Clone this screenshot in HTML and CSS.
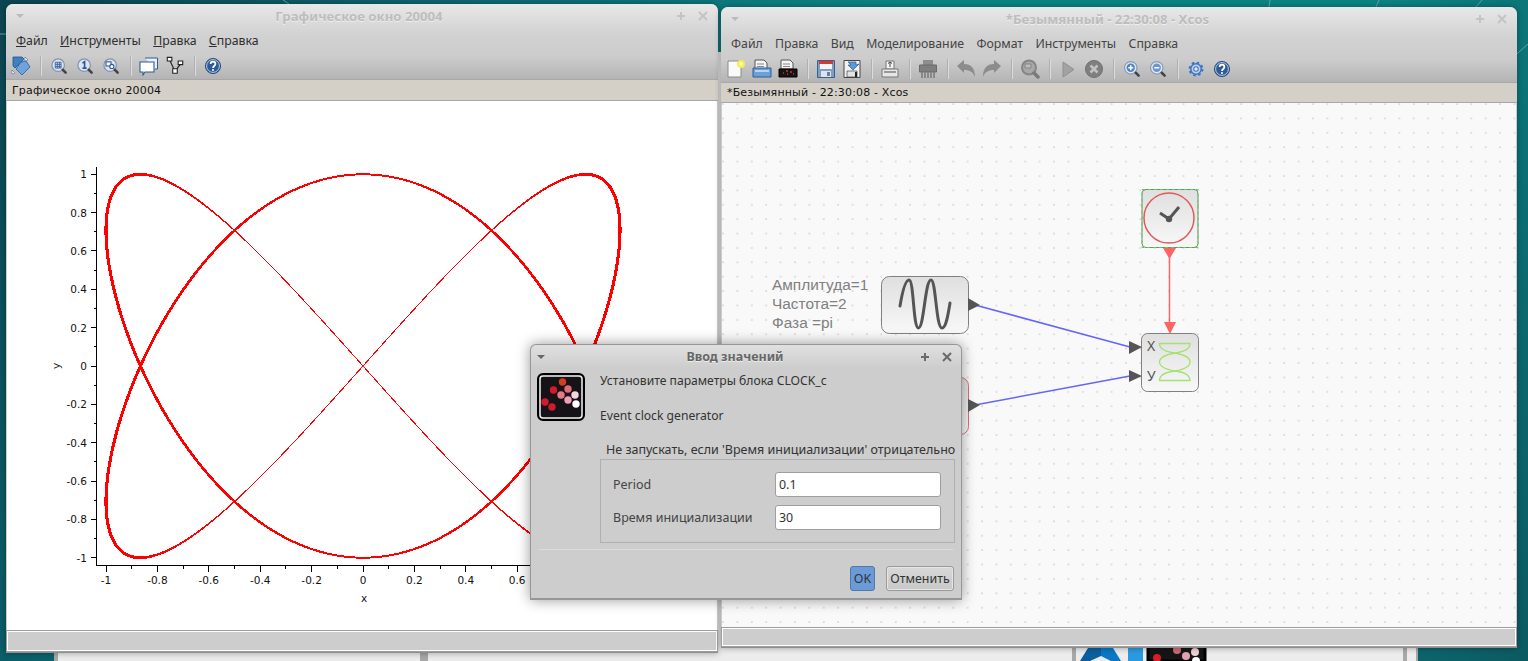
FILE: index.html
```html
<!DOCTYPE html>
<html lang="ru">
<head>
    <meta charset="UTF-8">
    <title>Xcos</title>
    <link rel="stylesheet" href="styles.css">
</head>
<body>
    <svg class="sprites" width="0" height="0">
        <defs>
            <linearGradient id="blockFill" x1="0" y1="0" x2="0" y2="1">
                <stop offset="0" stop-color="#dfdfdf"/>
                <stop offset="1" stop-color="#f8f8f8"/>
            </linearGradient>
            <symbol id="i-rotate" viewBox="0 0 20 20">
                <path d="M2 1h9l2 2-9 9-2-2z" fill="#3f7fc4" stroke="#24548c" stroke-width=".8"/>
                <path d="M10 6l5-1 4 6-8 8-6-6z" fill="#6ea3dc" stroke="#2c5c96" stroke-width=".8"/>
                <path d="M14 1l3 3-3 1zM1 14l3 3-3 1z" fill="#fff" stroke="#2c5c96" stroke-width=".5"/>
            </symbol>
            <symbol id="i-zoom-grid" viewBox="-2 -2 24 24">
                <circle cx="9" cy="9" r="7.5" fill="#dbe4f0" stroke="#8294ae" stroke-width="1.5"/>
                <path d="M5.5 5.5h7v7h-7zM5.5 8h7M5.5 10.500h7M8 5.500v7M10.500 5.500v7" fill="none" stroke="#2f5a98"/>
                <path d="M14.500 14.500l3.500 3.500" stroke="#444" stroke-width="3" stroke-linecap="round"/>
            </symbol>
            <symbol id="i-zoom-one" viewBox="-2 -2 24 24">
                <circle cx="9" cy="9" r="7.500" fill="#dbe4f0" stroke="#8294ae" stroke-width="1.5"/>
                <path d="M7 6.500l2.500-1.500v7.500M7 12.500h5" fill="none" stroke="#2f5a98" stroke-width="2"/>
                <path d="M14.500 14.500l3.500 3.500" stroke="#444" stroke-width="3" stroke-linecap="round"/>
            </symbol>
            <symbol id="i-zoom-fit" viewBox="-2 -2 24 24">
                <circle cx="9" cy="9" r="7.500" fill="#dbe4f0" stroke="#8294ae" stroke-width="1.500"/>
                <rect x="4" y="5" width="6" height="5" fill="#fff" stroke="#2f5a98" stroke-width="1.300"/>
                <circle cx="11" cy="10.500" r="2.500" fill="#fff" stroke="#2f5a98" stroke-width="1.300"/>
                <path d="M14.500 14.500l3.500 3.500" stroke="#444" stroke-width="3" stroke-linecap="round"/>
            </symbol>
            <symbol id="i-windows" viewBox="0 0 20 20">
                <path d="M6 2h12.500v11H16" fill="#e8f0fa" stroke="#2c5c96"/>
                <path d="M1 6h14v10H6l-2 3v-3H1z" fill="#fff" stroke="#2c5c96" stroke-width="1.100"/>
            </symbol>
            <symbol id="i-tree" viewBox="-1 -1 22 22">
                <path d="M4 3l6 13 6-8" fill="none" stroke="#222" stroke-width="1.300"/>
                <path d="M1.500 .500h5v4h-5zM7.500 13h5v5h-5zM13.500 4.500h5v4h-5z" fill="#fff" stroke="#222" stroke-width="1.200"/>
            </symbol>
            <symbol id="i-help" viewBox="-2.500 -2.500 25 25">
                <circle cx="10" cy="10" r="9.500" fill="#2f5a98" stroke="#1b3f74"/>
                <circle cx="10" cy="10" r="8" fill="none" stroke="#dfe8f4"/>
                <path d="M7 7.500c0-4 6-4 6 0 0 2.500-3 2.500-3 5" fill="none" stroke="#fff" stroke-width="2.200"/>
                <circle cx="10" cy="15" r="1.300" fill="#fff"/>
            </symbol>
            <symbol id="i-new" viewBox="0 0 20 20">
                <path d="M2 2h13v16H2z" fill="#fafafa" stroke="#8a8a8a"/>
                <circle cx="15" cy="5" r="4" fill="#f6ee4a"/>
                <circle cx="15" cy="5" r="2" fill="#fffbc0"/>
            </symbol>
            <symbol id="i-open" viewBox="0 0 20 20">
                <path d="M3 1h9l3 3v6H3z" fill="#f4f4f4" stroke="#555"/>
                <path d="M5 5h7M5 7.500h7" stroke="#888"/>
                <path d="M1 9h18v9H1z" fill="#6d9fd8" stroke="#2c5c96"/>
                <path d="M3 12h14" stroke="#b7d3f0" stroke-width="2"/>
            </symbol>
            <symbol id="i-open-black" viewBox="0 0 20 20">
                <path d="M3 1h9l3 3v6H3z" fill="#f4f4f4" stroke="#555"/>
                <path d="M5 5h7M5 7.500h7" stroke="#888"/>
                <path d="M1 10h18v8H1z" fill="#151515" stroke="#000"/>
                <path d="M5 14h1M8 12h2M9 15h1M12 13h2M15 15h1" stroke="#e02828" stroke-width="1.500"/>
            </symbol>
            <symbol id="i-save" viewBox="0 0 20 20">
                <path d="M1.500 1.500h17v17h-17z" fill="#7d9ec6" stroke="#38608f"/>
                <path d="M3 2h14v3H3z" fill="#d8382e"/>
                <path d="M4 5h12v5H4z" fill="#f5f5f5"/>
                <path d="M5 12h10v6H5z" fill="#dfe4ea"/>
                <path d="M11 13h3v4h-3z" fill="#6d7f96"/>
            </symbol>
            <symbol id="i-save-as" viewBox="0 0 20 20">
                <path d="M2 1.500h16v17H2z" fill="#f2f2f2" stroke="#444"/>
                <path d="M5 12h10v6H5z" fill="#e2e2e2" stroke="#444" stroke-width=".7"/>
                <path d="M13 13h2v5h-2z" fill="#222"/>
                <path d="M6 3h8v3l3-1-6 6-5-5h3z" fill="#5a9ad8" stroke="#2c5c96" stroke-width=".7"/>
            </symbol>
            <symbol id="i-import" viewBox="0 0 20 20">
                <path d="M6 2h8v8H6z" fill="#f4f4f4" stroke="#777"/>
                <path d="M10 3v5M8 4.500l2-1.500 2 1.500" fill="none" stroke="#444"/>
                <path d="M2 10h16v8H2z" fill="#e6e6e6" stroke="#777"/>
                <path d="M4 13h12" stroke="#999" stroke-width="2"/>
            </symbol>
            <symbol id="i-shred" viewBox="0 0 20 20">
                <path d="M5 1h10v6H5z" fill="#8e8e8e"/>
                <path d="M1.500 6h17v7h-17z" fill="#7f7f7f" stroke="#6a6a6a"/>
                <path d="M4 13v6M7 13v6M10 13v6M13 13v6M16 13v6" stroke="#808080" stroke-width="1.700"/>
            </symbol>
            <symbol id="i-undo" viewBox="0 0 20 20">
                <path d="M1 7l7-6v4c7 0 11 4 11 13-2-5-5-7-11-7v3z" fill="#8c8c8c"/>
            </symbol>
            <symbol id="i-redo" viewBox="0 0 20 20">
                <path d="M19 7l-7-6v4c-7 0-11 4-11 13 2-5 5-7 11-7v3z" fill="#8c8c8c"/>
            </symbol>
            <symbol id="i-zoom-off" viewBox="0 0 20 20">
                <circle cx="9" cy="8.500" r="7" fill="#a8a8a8" stroke="#858585" stroke-width="2"/>
                <path d="M5 5h6v4H5z" fill="#bdbdbd" stroke="#858585"/>
                <path d="M14 14l4 4" stroke="#7a7a7a" stroke-width="3.500" stroke-linecap="round"/>
            </symbol>
            <symbol id="i-play" viewBox="0 0 20 20">
                <path d="M5 3l11 7.500-11 7.500z" fill="#a2a2a2" stroke="#909090"/>
            </symbol>
            <symbol id="i-stop" viewBox="0 0 20 20">
                <circle cx="10" cy="10" r="8.500" fill="#7f7f7f" stroke="#707070"/>
                <path d="M6.500 6.500l7 7M13.500 6.500l-7 7" stroke="#c2c2c2" stroke-width="2.500"/>
            </symbol>
            <symbol id="i-zoom-in" viewBox="-2 -2 24 24">
                <circle cx="8.500" cy="8.500" r="7.500" fill="#e0e8f3" stroke="#8a9ab3" stroke-width="1.500"/>
                <circle cx="8.500" cy="8.500" r="5" fill="#4f82c4"/>
                <path d="M5.500 8.500h6M8.500 5.500v6" stroke="#fff" stroke-width="2"/>
                <path d="M14.500 14.500l3.500 3.500" stroke="#444" stroke-width="3" stroke-linecap="round"/>
            </symbol>
            <symbol id="i-zoom-out" viewBox="-2 -2 24 24">
                <circle cx="8.500" cy="8.500" r="7.500" fill="#e0e8f3" stroke="#8a9ab3" stroke-width="1.500"/>
                <circle cx="8.500" cy="8.500" r="5" fill="#6d95ca"/>
                <path d="M5.500 8.500h6" stroke="#fff" stroke-width="2"/>
                <path d="M14.500 14.500l3.500 3.500" stroke="#444" stroke-width="3" stroke-linecap="round"/>
            </symbol>
            <symbol id="i-gear" viewBox="-3.500 -3.500 27 27">
                <circle cx="10" cy="10" r="7" fill="#bcd0ec" stroke="#3f74c4" stroke-width="2"/>
                <circle cx="10" cy="10" r="8.500" fill="none" stroke="#3f74c4" stroke-width="3" stroke-dasharray="3.300 3.370"/>
                <circle cx="10" cy="10" r="3" fill="#e4ecf8" stroke="#3f74c4" stroke-width="1.500"/>
            </symbol>
        </defs>
    </svg>

    <!-- окна за основными, видны только снизу -->
    <div class="back-window">
        <div class="back-pane back-pane-a"></div>
        <div class="back-pane back-pane-b"></div>
        <div class="back-pane back-pane-c">
            <svg class="back-icons" width="135" height="14" viewBox="0 0 135 14">
                <path d="M8 1H21V9L10 14H0z" fill="#0a5f9e"/>
                <path d="M21 1H33L41 14H31L21 9z" fill="#0a78c4"/>
                <rect x="48" y="0" width="15" height="14" fill="#2a9ae0"/>
                <rect x="68" y="-6" width="57" height="20" fill="#151515" stroke="#000" stroke-width="3"/>
                <circle cx="97" cy="3" r="4" fill="#d06878"/>
                <circle cx="106" cy="9" r="4" fill="#e4a0b0"/>
                <circle cx="115" cy="5" r="4" fill="#f0d0d8"/>
                <circle cx="116" cy="14" r="4" fill="#fff"/>
                <circle cx="77" cy="11" r="4" fill="#d81c28"/>
            </svg>
        </div>
        <div class="back-pane back-pane-d"></div>
    </div>

    <svg class="wallpaper" width="1528" height="661" viewBox="0 0 1528 661">
        <path d="M0 34h6M1270 0l-1 7M1379 0l-3 7M1482 0l-6 7M283 0l6 4M1510 60l18-16" stroke="#5fa5a8" fill="none"/>
    </svg>

    <!-- графическое окно -->
    <div class="window plot-window">
        <div class="win-head">
            <div class="win-title">
                <svg class="wm-btn" width="12" height="12"><path d="M2 4h8l-4 4z" fill="#bbb"/></svg>
                <span class="title-text">Графическое окно 20004</span>
                <svg class="wm-btn" width="12" height="12"><path d="M6 2v8M2 6h8" stroke="#c4c4c4" stroke-width="2"/></svg>
                <svg class="wm-btn" width="12" height="12"><path d="M2 2l8 8M10 2l-8 8" stroke="#c4c4c4" stroke-width="2"/></svg>
            </div>
            <div class="menubar menubar-plot">
                <span><u>Ф</u>айл</span>
                <span><u>И</u>нструменты</span>
                <span><u>П</u>равка</span>
                <span><u>С</u>правка</span>
            </div>
            <div class="toolbar">
                <svg class="ico"><use href="#i-rotate"/></svg>
                <i class="tool-sep"></i>
                <svg class="ico"><use href="#i-zoom-grid"/></svg>
                <svg class="ico"><use href="#i-zoom-one"/></svg>
                <svg class="ico"><use href="#i-zoom-fit"/></svg>
                <i class="tool-sep"></i>
                <svg class="ico"><use href="#i-windows"/></svg>
                <svg class="ico"><use href="#i-tree"/></svg>
                <i class="tool-sep"></i>
                <svg class="ico"><use href="#i-help"/></svg>
            </div>
        </div>
        <div class="tabbar">Графическое окно 20004</div>
        <div class="canvas plot-canvas">
            <svg id="plot" width="710" height="529" viewBox="7 101 710 529"></svg>
        </div>
        <div class="statusbar"></div>
    </div>

    <!-- окно Xcos -->
    <div class="window xcos-window">
        <div class="win-head">
            <div class="win-title">
                <svg class="wm-btn" width="12" height="12"><path d="M2 4h8l-4 4z" fill="#bbb"/></svg>
                <span class="title-text">*Безымянный - 22:30:08 - Xcos</span>
                <svg class="wm-btn" width="12" height="12"><path d="M6 2v8M2 6h8" stroke="#c4c4c4" stroke-width="2"/></svg>
                <svg class="wm-btn" width="12" height="12"><path d="M2 2l8 8M10 2l-8 8" stroke="#c4c4c4" stroke-width="2"/></svg>
            </div>
            <div class="menubar menubar-xcos">
                <span>Файл</span>
                <span>Правка</span>
                <span>Вид</span>
                <span>Моделирование</span>
                <span>Формат</span>
                <span>Инструменты</span>
                <span>Справка</span>
            </div>
            <div class="toolbar">
                <svg class="ico"><use href="#i-new"/></svg>
                <svg class="ico"><use href="#i-open"/></svg>
                <svg class="ico"><use href="#i-open-black"/></svg>
                <i class="tool-sep"></i>
                <svg class="ico"><use href="#i-save"/></svg>
                <svg class="ico"><use href="#i-save-as"/></svg>
                <i class="tool-sep"></i>
                <svg class="ico"><use href="#i-import"/></svg>
                <i class="tool-sep"></i>
                <svg class="ico"><use href="#i-shred"/></svg>
                <i class="tool-sep"></i>
                <svg class="ico"><use href="#i-undo"/></svg>
                <svg class="ico"><use href="#i-redo"/></svg>
                <i class="tool-sep"></i>
                <svg class="ico"><use href="#i-zoom-off"/></svg>
                <i class="tool-sep"></i>
                <svg class="ico"><use href="#i-play"/></svg>
                <svg class="ico"><use href="#i-stop"/></svg>
                <i class="tool-sep"></i>
                <svg class="ico"><use href="#i-zoom-in"/></svg>
                <svg class="ico"><use href="#i-zoom-out"/></svg>
                <i class="tool-sep"></i>
                <svg class="ico"><use href="#i-gear"/></svg>
                <svg class="ico"><use href="#i-help"/></svg>
            </div>
        </div>
        <div class="tabbar">*Безымянный - 22:30:08 - Xcos</div>
        <div class="canvas xcos-canvas">
            <svg width="794" height="524" viewBox="722 103 794 524">
                <text class="note" x="772" y="290">Амплитуда=1</text>
                <text class="note" x="772" y="309">Частота=2</text>
                <text class="note" x="772" y="328">Фаза =pi</text>

                <rect class="block" x="881.500" y="276.500" width="87" height="57" rx="8"/>
                <path d="M900 306C903 288 906 280 909 280C914 280 913 328 918.500 328C924 328 925 280 931 280C936 280 936 328 942 328C946 328 948 315 950 303" fill="none" stroke="#555" stroke-width="3" stroke-linecap="round"/>

                <rect class="block block-red" x="881.500" y="377.500" width="87" height="57" rx="8"/>

                <rect class="block" x="1142" y="189.500" width="56" height="58" rx="4"/>
                <rect x="1142" y="189.500" width="56" height="58" fill="none" stroke="#44e044" stroke-dasharray="3 3"/>
                <circle cx="1169" cy="218" r="25" fill="none" stroke="#e05a5a" stroke-width="1.500"/>
                <path d="M1160 213l9 6 10-12" fill="none" stroke="#555" stroke-width="3"/>
                <circle cx="1169" cy="219" r="3.200" fill="#555"/>

                <rect class="block" x="1141.500" y="333.500" width="57" height="58" rx="6"/>
                <text class="port-label" x="1147" y="351">X</text>
                <text class="port-label" x="1147" y="381">У</text>
                <path d="M1159.500 343.500H1190C1190 349 1183 352 1175 353C1167 352 1159.500 349 1159.500 343.500ZM1175 353C1164 355 1159.500 358 1159.500 362C1159.500 366 1164 369 1175 371C1186 369 1190 366 1190 362C1190 358 1186 355 1175 353ZM1159.500 380.500H1190C1190 375 1183 372 1175 371C1167 372 1159.500 375 1159.500 380.500Z" fill="none" stroke="#a6e070" stroke-width="1.300"/>

                <path d="M975 305L1130 347M975 405L1130 376" stroke="#6464ff" stroke-width="1.500" fill="none"/>
                <path d="M1169.500 252V323" stroke="#ff6464" stroke-width="1.500"/>
                <path d="M1163 248h13l-6.500 11zM1164 322h12l-6 12z" fill="#ff6464"/>
                <path d="M968 298l12 7-12 6zM968 399l12 6-12 7zM1129 341l13 6-13 7zM1129 370l13 6-13 6z" fill="#555"/>
            </svg>
        </div>
        <div class="statusbar"></div>
    </div>

    <!-- диалог -->
    <div class="dialog">
        <div class="dlg-title">
            <svg class="wm-btn" width="12" height="12"><path d="M2 4h8l-4 4z" fill="#666"/></svg>
            <span class="dlg-title-text">Ввод значений</span>
            <svg class="wm-btn" width="12" height="12"><path d="M6 2v8M2 6h8" stroke="#6a6a6a" stroke-width="2"/></svg>
            <svg class="wm-btn" width="12" height="12"><path d="M2 2l8 8M10 2l-8 8" stroke="#6a6a6a" stroke-width="2"/></svg>
        </div>
        <div class="dlg-body">
            <svg class="dlg-logo" width="48" height="48" viewBox="0 0 48 48">
                <rect x="1" y="1" width="46" height="46" rx="5" fill="#151318" stroke="#000" stroke-width="2"/>
                <rect x="3" y="3" width="42" height="42" rx="3" fill="#151318" stroke="#f2f2f2" stroke-width="1.500"/>
                <circle cx="25.500" cy="9" r="3.700" fill="#d0401e"/>
                <circle cx="16.500" cy="17" r="3.700" fill="#d01c2a"/>
                <circle cx="31" cy="16" r="3.700" fill="#e06a7a"/>
                <circle cx="24" cy="22" r="3.700" fill="#e67888"/>
                <circle cx="38" cy="22" r="3.700" fill="#f6d4da"/>
                <circle cx="31" cy="27" r="3.700" fill="#f0a0b4"/>
                <circle cx="8" cy="29" r="3.700" fill="#d01c2a"/>
                <circle cx="15" cy="34" r="3.700" fill="#d01c2a"/>
                <circle cx="39" cy="31" r="3.700" fill="#fff"/>
            </svg>
            <div class="dlg-main">
                <p class="msg msg-first">Установите параметры блока CLOCK_c</p>
                <p class="msg msg-second">Event clock generator</p>
                <p class="msg msg-legend">Не запускать, если 'Время инициализации' отрицательно</p>
                <div class="fields">
                    <div class="field">
                        <span class="field-label">Period</span>
                        <input class="field-input" type="text" value="0.1">
                    </div>
                    <div class="field">
                        <span class="field-label">Время инициализации</span>
                        <input class="field-input" type="text" value="30">
                    </div>
                </div>
            </div>
        </div>
        <div class="dlg-sep"></div>
        <div class="dlg-buttons">
            <button class="btn btn-ok">OK</button>
            <button class="btn">Отменить</button>
        </div>
    </div>

    <script src="script.js"></script>
</body>
</html>
```

FILE: styles.css
```css
* {
    box-sizing: border-box;
}
html, body {
    margin: 0;
    height: 661px;
    overflow: hidden;
}
body {
    position: relative;
    width: 1528px;
    font-family: 'Noto Sans', sans-serif;
    font-size: 12.500px;
    color: #333;
    background: linear-gradient(115deg, #0c4652 0%, #0c6a72 25%, #0c8484 50%, #0c8484 75%, #0c5a62 100%);
}
.sprites {
    position: absolute;
}
.wallpaper {
    position: absolute;
    left: 0;
    top: 0;
}

/* окна позади */
.back-window {
    position: absolute;
    left: 54px;
    top: 52px;
    width: 1364px;
    height: 609px;
    display: flex;
    background: #a8a8a8;
    padding: 0 2px 0 4px;
}
.back-pane {
    background: #ececec;
}
.back-pane-a {
    width: 362px;
    margin-right: 8px;
}
.back-pane-b {
    width: 644px;
    margin-right: 4px;
}
.back-pane-c {
    width: 327px;
    margin-right: 4px;
    position: relative;
}
.back-pane-d {
    flex: 1;
}
.back-icons {
    position: absolute;
    left: 4px;
    bottom: 0;
}

/* окна */
.window {
    position: absolute;
    display: flex;
    flex-direction: column;
    border-radius: 7px 7px 0 0;
    overflow: hidden;
    background: #ccc;
    border-bottom: 1px solid #8e8e8e;
    box-shadow: 0 0 6px rgba(0,0,0,0.35);
}
.plot-window {
    left: 6px;
    top: 4px;
    width: 712px;
    height: 649px;
}
.xcos-window {
    left: 721px;
    top: 7px;
    width: 796px;
    height: 641px;
}
.win-head {
    height: 75px;
    flex: none;
    background: linear-gradient(#e8e8e8 0%, #d2d2d2 40%, #cccccc 70%, #b4b4b4 100%);
}
.win-title {
    height: 24px;
    display: flex;
    align-items: center;
    padding: 0 9px 0 8px;
    gap: 10px;
}
.title-text {
    flex: 1;
    text-align: center;
    font-weight: 700;
    font-size: 13.200px;
    color: #bdbdbd;
    text-shadow: 0 1px 0 #eee;
}
.plot-window .title-text {
    padding-left: 17px;
}
.wm-btn {
    flex: none;
}
.menubar {
    height: 24px;
    display: flex;
    align-items: center;
    gap: 12.300px;
    padding-left: 10px;
    font-size: 12.300px;
    color: #2e2e2e;
}
.menubar-xcos {
    color: #444;
}
.toolbar {
    height: 27px;
    display: flex;
    align-items: center;
    padding-left: 5px;
    gap: 6px;
}
.ico {
    width: 20px;
    height: 20px;
    flex: none;
}
.tool-sep {
    width: 1px;
    height: 20px;
    margin: 0 2.500px;
    background: #b0b0b0;
    box-shadow: 1px 0 0 #dcdcdc;
}
.tabbar {
    height: 22px;
    flex: none;
    display: flex;
    align-items: center;
    padding-left: 6px;
    font-family: 'DejaVu Sans', sans-serif;
    font-size: 11px;
    letter-spacing: 0.160px;
    color: #111;
    background: #d4d0c8;
    border-top: 1px solid #a8a8a8;
    border-bottom: 1px solid #a8a8a8;
}
.xcos-window .tabbar {
    height: 21px;
}
.canvas {
    flex: 1;
    overflow: hidden;
    margin: 0 1px;
}
.canvas svg {
    display: block;
}
.plot-canvas {
    background: #fff;
}
.xcos-canvas {
    background-color: #f9f9f9;
    background-image: radial-gradient(circle at 1px 1px, #d4d4d4 0.6px, transparent 0.9px);
    background-size: 14.400px 14.400px;
}
.statusbar {
    height: 20px;
    flex: none;
    margin: 1px;
    background: #cdcdcd;
    border: 1px solid #fff;
    outline: 1px solid #9e9e9e;
}
.xcos-window .statusbar {
    height: 18px;
}

/* график */
.tick {
    stroke: #000;
    stroke-width: 1;
    shape-rendering: crispEdges;
}
.tick-label {
    font-family: 'DejaVu Sans', sans-serif;
    font-size: 10.500px;
    fill: #111;
}
.curve {
    stroke: #f00;
    stroke-linecap: round;
    shape-rendering: crispEdges;
}

/* схема */
.block {
    fill: url(#blockFill);
    stroke: #808080;
}
.block-red {
    stroke: #e07070;
}
.note {
    font-family: 'Liberation Sans', sans-serif;
    font-size: 15.400px;
    fill: #808080;
}
.port-label {
    font-family: 'Noto Sans', sans-serif;
    font-size: 14px;
    fill: #555;
}

/* диалог */
.dialog {
    position: absolute;
    left: 530px;
    top: 344px;
    width: 432px;
    height: 256px;
    background: #cdcdcd;
    border: 1px solid #979797;
    border-bottom-width: 2px;
    border-radius: 6px 6px 0 0;
    box-shadow: 0 0 14px rgba(0,0,0,0.4);
}
.dlg-title {
    height: 23px;
    display: flex;
    align-items: center;
    gap: 10px;
    padding: 0 8px 0 4px;
    background: linear-gradient(#e0e0e0, #cdcdcd);
    border-radius: 6px 6px 0 0;
}
.dlg-title-text {
    flex: 1;
    text-align: center;
    font-weight: 700;
    font-size: 12.500px;
    color: #666;
    text-shadow: 0 1px 0 #eee;
    margin-left: 4px;
}
.dlg-body {
    display: flex;
    gap: 15px;
    padding: 5px 6px 0;
}
.dlg-logo {
    flex: none;
}
.dlg-main {
    flex: 1;
    min-width: 0;
}
.msg {
    margin: 0;
    line-height: 16px;
    white-space: nowrap;
}
.msg-first {
    font-size: 12.150px;
}
.msg-second {
    margin-top: 19px;
    font-size: 12.150px;
}
.msg-legend {
    margin: 18px 0 0 6px;
}
.fields {
    width: 355px;
    height: 84px;
    margin-top: 1px;
    border: 1px solid #b0b0b0;
    padding: 12px;
    display: flex;
    flex-direction: column;
    gap: 8px;
}
.field {
    display: flex;
    align-items: center;
}
.field-label {
    width: 162px;
    flex: none;
    color: #444;
}
.field-input {
    width: 166px;
    height: 25px;
    padding: 0 3px;
    border: 1px solid #9e9e9e;
    border-radius: 3px;
    background: #fff;
    font: 12.400px 'Noto Sans', sans-serif;
    color: #333;
}
.dlg-sep {
    height: 1px;
    margin: 6px 8px 0;
    background: #dcdcdc;
}
.dlg-buttons {
    display: flex;
    justify-content: flex-end;
    gap: 11px;
    margin-top: 16px;
    padding-right: 7px;
}
.btn {
    height: 25px;
    padding: 0;
    width: 68px;
    font: 12.400px 'Noto Sans', sans-serif;
    color: #333;
    background: linear-gradient(#d8d8d8, #c8c8c8);
    border: 1px solid #9a9a9a;
    border-radius: 3px;
    box-shadow: inset 0 0 0 1px #e6e6e6;
}
.btn-ok {
    width: 25px;
    background: #6a9bd8;
    border-color: #5078a8;
    box-shadow: none;
}
```

FILE: script.js
```js
// оси и кривая графика: x = sin(2t), y = cos(3t)
const SVG_NS = 'http://www.w3.org/2000/svg';
const plot = document.getElementById('plot');

const X0 = 363, XS = 257;
const Y0 = 366, YS = 191.7;
const AXIS_X = 96.5, AXIS_Y = 565.5;

function add(tag, attrs, text) {
    const el = document.createElementNS(SVG_NS, tag);
    for (const k in attrs) el.setAttribute(k, attrs[k]);
    if (text !== undefined) el.textContent = text;
    plot.appendChild(el);
    return el;
}

function label(v) {
    return String(Math.round(v * 10) / 10);
}

add('line', { class: 'tick', x1: AXIS_X, y1: 167, x2: AXIS_X, y2: AXIS_Y });
add('line', { class: 'tick', x1: AXIS_X, y1: AXIS_Y, x2: 632, y2: AXIS_Y });

for (let i = -10; i <= 10; i++) {
    const v = i / 10;
    const major = i % 2 === 0;
    const len = major ? 6 : 3;
    const py = Y0 - YS * v;
    const px = X0 + XS * v;
    add('line', { class: 'tick', x1: AXIS_X - len, y1: py, x2: AXIS_X, y2: py });
    add('line', { class: 'tick', x1: px, y1: AXIS_Y, x2: px, y2: AXIS_Y + len });
    if (major) {
        add('text', { class: 'tick-label', x: 87, y: py + 4, 'text-anchor': 'end' }, label(v));
        add('text', { class: 'tick-label', x: px, y: 584, 'text-anchor': 'middle' }, label(v));
    }
}
add('text', { class: 'tick-label', x: 364, y: 602, 'text-anchor': 'middle' }, 'x');
add('text', { class: 'tick-label', x: 0, y: 0, 'text-anchor': 'middle', transform: 'translate(60 366) rotate(-90)' }, 'y');

// у центра линия тонкая, к краям толще
function widthAt(t) {
    const a = Math.abs(t - Math.PI / 2);
    const b = Math.abs(t - 3 * Math.PI / 2);
    const d = Math.min(a, b);
    const k = Math.min(1, Math.max(0, (d - 0.2) / 0.35));
    return 1 + k * (0.900 + 1.200 * Math.abs(Math.sin(2 * t)));
}

const STEPS = 900;
for (let i = 0; i < STEPS; i++) {
    const t1 = 2 * Math.PI * i / STEPS;
    const t2 = 2 * Math.PI * (i + 1) / STEPS;
    add('line', {
        class: 'curve',
        x1: X0 + XS * Math.sin(2 * t1),
        y1: Y0 - YS * Math.cos(3 * t1),
        x2: X0 + XS * Math.sin(2 * t2),
        y2: Y0 - YS * Math.cos(3 * t2),
        'stroke-width': widthAt(t1)
    });
}
```
